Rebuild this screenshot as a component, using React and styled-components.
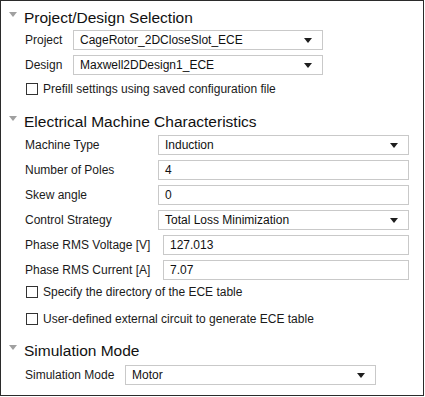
import React from 'react';
import styled, { createGlobalStyle } from 'styled-components';

const GlobalStyle = createGlobalStyle`
  body {
    margin: 0;
    background: #fff;
    font-family: "Liberation Sans", Arial, sans-serif;
  }
`;

const Panel = styled.div`
  width: 424px;
  height: 396px;
  box-sizing: border-box;
  border: 1px solid #2b2b2b;
  background: #fff;
  padding-top: 6px;
  color: #1a1a1a;
`;

const Header = styled.div`
  display: flex;
  align-items: flex-start;
  height: 20px;
  margin-top: ${p => p.$mt || 0}px;
`;

const Caret = styled.svg`
  margin: ${p => p.$off || 4}px 0 0 8px;
  width: 8px;
  height: 5px;
  flex: none;
`;

const Title = styled.div`
  margin-left: 7px;
  font-size: 15.5px;
  line-height: 20px;
  color: #111;
`;

const Row = styled.div`
  display: flex;
  align-items: center;
  height: 20px;
  padding-left: 24px;
  margin-top: ${p => p.$mt || 0}px;
`;

const Label = styled.div`
  width: ${p => p.$w}px;
  flex: none;
  font-size: 12px;
  white-space: nowrap;
`;

const Field = styled.div`
  width: ${p => p.$w}px;
  height: 20px;
  box-sizing: border-box;
  border: 1px solid #c9c9c9;
  display: flex;
  align-items: center;
  justify-content: space-between;
  padding: 0 10px 0 6px;
  font-size: 12px;
  color: #111;
  white-space: nowrap;
`;

const CheckRow = styled.label`
  display: flex;
  align-items: center;
  height: 18px;
  padding-left: 25px;
  margin-top: ${p => p.$mt || 0}px;
  font-size: 12px;
`;

const Box = styled.span`
  width: 12px;
  height: 12px;
  box-sizing: border-box;
  border: 1px solid #333;
  background: #fff;
  margin-right: 5px;
  flex: none;
`;

const Arrow = () => (
  <svg width="8" height="5" viewBox="0 0 8 5">
    <polygon points="0,0 8,0 4,5" fill="#1e1e1e" />
  </svg>
);

const Section = ({ title, mt, children }) => (
  <>
    <Header $mt={mt}>
      <Caret viewBox="0 0 8 5">
        <polygon points="0,0 8,0 4,5" fill="#a0a0a0" />
      </Caret>
      <Title>{title}</Title>
    </Header>
    {children}
  </>
);

const Select = ({ w, value }) => (
  <Field $w={w}>
    <span>{value}</span>
    <Arrow />
  </Field>
);

const Check = ({ mt, children }) => (
  <CheckRow $mt={mt}>
    <Box />
    {children}
  </CheckRow>
);

export default function App() {
  return (
    <Panel>
      <GlobalStyle />
      <Section title="Project/Design Selection" mt={1}>
        <Row $mt={2}>
          <Label $w={48}>Project</Label>
          <Select w={250} value="CageRotor_2DCloseSlot_ECE" />
        </Row>
        <Row $mt={5}>
          <Label $w={48}>Design</Label>
          <Select w={250} value="Maxwell2DDesign1_ECE" />
        </Row>
        <Check mt={5}>Prefill settings using saved configuration file</Check>
      </Section>

      <Section title="Electrical Machine Characteristics" mt={14}>
        <Row $mt={3}>
          <Label $w={133}>Machine Type</Label>
          <Select w={251} value="Induction" />
        </Row>
        <Row $mt={5}>
          <Label $w={133}>Number of Poles</Label>
          <Field $w={251}>4</Field>
        </Row>
        <Row $mt={5}>
          <Label $w={133}>Skew angle</Label>
          <Field $w={251}>0</Field>
        </Row>
        <Row $mt={5}>
          <Label $w={133}>Control Strategy</Label>
          <Select w={251} value="Total Loss Minimization" />
        </Row>
        <Row $mt={5}>
          <Label $w={138}>Phase RMS Voltage [V]</Label>
          <Field $w={246}>127.013</Field>
        </Row>
        <Row $mt={5}>
          <Label $w={138}>Phase RMS Current [A]</Label>
          <Field $w={246}>7.07</Field>
        </Row>
        <Check mt={3}>Specify the directory of the ECE table</Check>
        <Check mt={9}>User-defined external circuit to generate ECE table</Check>
      </Section>

      <Section title="Simulation Mode" mt={13}>
        <Row $mt={4}>
          <Label $w={100}>Simulation Mode</Label>
          <Select w={251} value="Motor" />
        </Row>
      </Section>
    </Panel>
  );
}
